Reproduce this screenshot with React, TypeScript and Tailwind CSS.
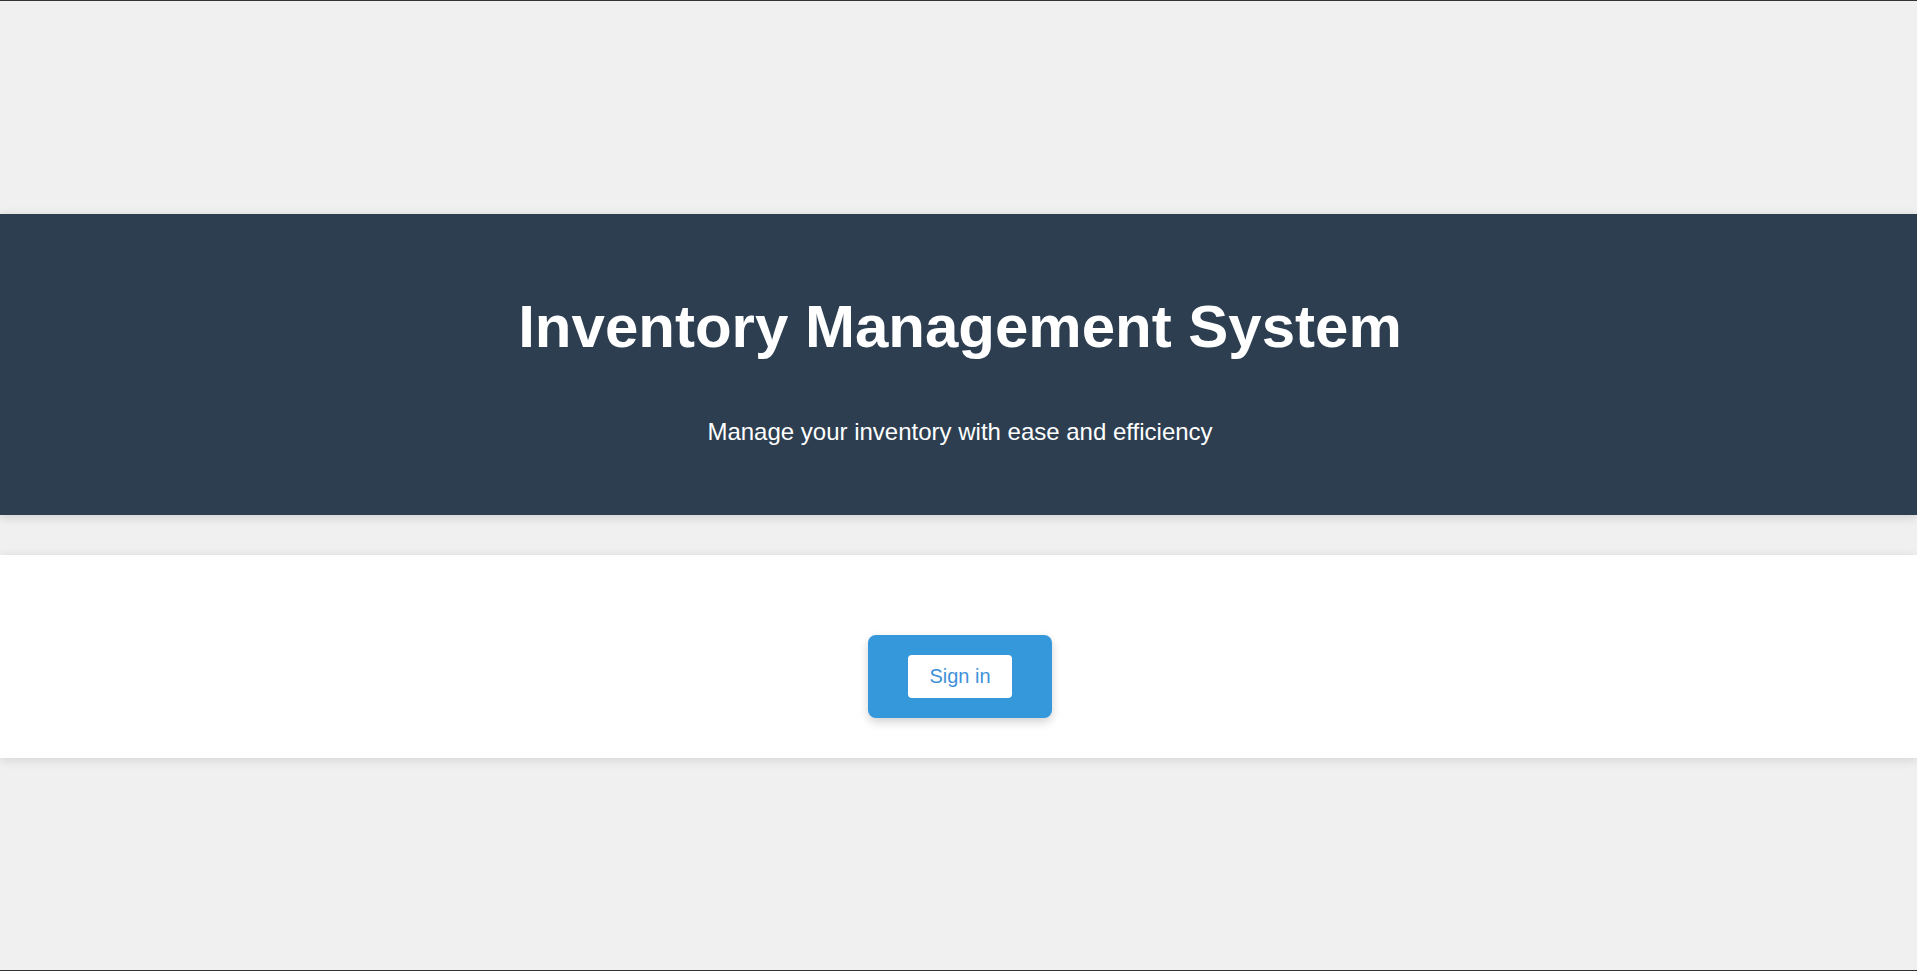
import React from "react";

const App = () => {
  return (
    <div
      className="min-h-[971px] box-border border-y border-[#333333] bg-[#f0f0f0]"
      style={{ fontFamily: '"Liberation Sans", Arial, sans-serif' }}
    >
      {/* Hero */}
      <header className="mt-[213px] bg-[#2c3e50] pt-[78px] pb-[69px] pl-[3px] text-center text-white shadow-[0_2px_10px_rgba(0,0,0,0.15)]">
        <h1 className="text-[60px] font-bold leading-[69px]">
          Inventory Management System
        </h1>
        <p className="mt-[57px] text-[24px] leading-[28px]">
          Manage your inventory with ease and efficiency
        </p>
      </header>

      {/* Sign in panel */}
      <section className="mt-[40px] flex justify-center bg-white pt-[80px] pb-[40px] pl-[3px] shadow-[0_2px_10px_rgba(0,0,0,0.12)]">
        <div className="rounded-[8px] bg-[#3498db] px-[40px] py-[20px] shadow-[0_4px_10px_rgba(0,0,0,0.18)]">
          <button className="rounded-[4px] bg-white px-[21px] py-[10px] text-[20px] leading-[23px] text-[#4091da]">
            Sign in
          </button>
        </div>
      </section>
    </div>
  );
};

export default App;
